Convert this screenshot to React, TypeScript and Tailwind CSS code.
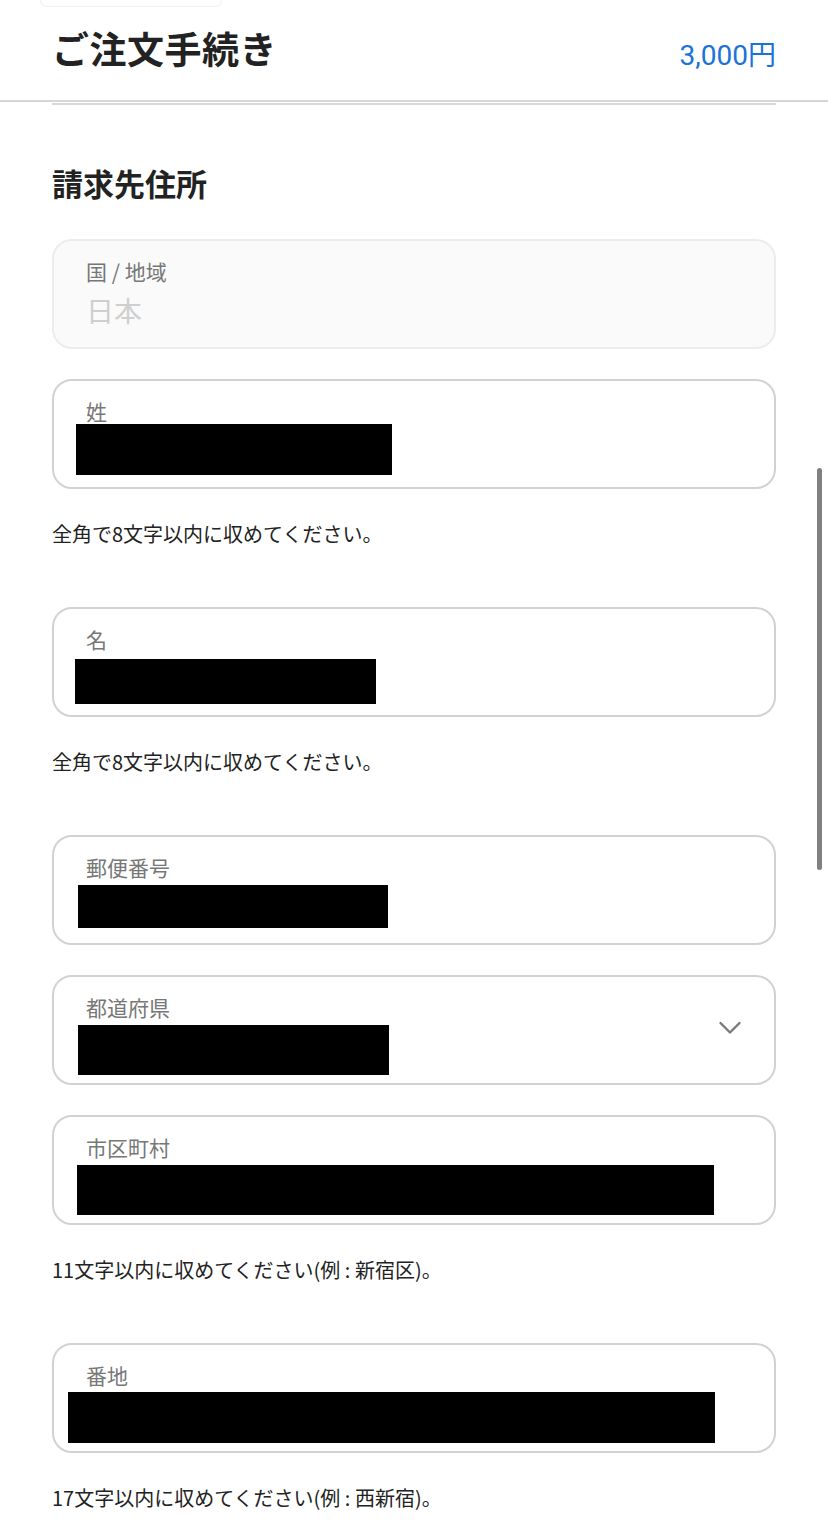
import React from 'react';

type Field = {
  label: string;
  select?: boolean;
  hint?: string;
  // redacted value block, offsets from the field's top-left corner
  mask: { left: number; top: number; width: number; height: number };
};

const fields: Field[] = [
  { label: '姓', hint: '全角で8文字以内に収めてください。', mask: { left: 24, top: 45, width: 316, height: 51 } },
  { label: '名', hint: '全角で8文字以内に収めてください。', mask: { left: 23, top: 52, width: 301, height: 45 } },
  { label: '郵便番号', mask: { left: 26, top: 50, width: 310, height: 43 } },
  { label: '都道府県', select: true, mask: { left: 26, top: 50, width: 311, height: 50 } },
  { label: '市区町村', hint: '11文字以内に収めてください(例 : 新宿区)。', mask: { left: 25, top: 50, width: 637, height: 50 } },
  { label: '番地', hint: '17文字以内に収めてください(例 : 西新宿)。', mask: { left: 16, top: 49, width: 647, height: 51 } },
];

function Chevron() {
  return (
    <svg width="24" height="14" viewBox="0 0 24 14" fill="none" className="absolute right-[32px] top-[44px]">
      <polyline points="2.5,2 12,11.5 21.5,2" stroke="#7a7a7a" strokeWidth="2.4" strokeLinecap="round" strokeLinejoin="round" />
    </svg>
  );
}

function InputField({ field }: { field: Field }) {
  return (
    <div>
      <div className="relative h-[110px] rounded-[20px] border-2 border-[#d2d2d2] bg-white px-[32px] pt-[20px]">
        <div className="text-[21px] leading-[21px] text-[#777]">{field.label}</div>
        <div
          className="absolute bg-black"
          style={{ left: field.mask.left - 2, top: field.mask.top - 2, width: field.mask.width, height: field.mask.height }}
        />
        {field.select && <Chevron />}
      </div>
      {field.hint ? (
        <p className="pt-[31px] pb-[59px] text-[20px] leading-[28px] text-[#222]">{field.hint}</p>
      ) : (
        <div className="h-[30px]" />
      )}
    </div>
  );
}

export default function App() {
  return (
    <div
      className="relative min-h-[1540px] overflow-hidden bg-white"
      style={{ fontFamily: '"Noto Sans CJK JP", "Noto Sans", sans-serif' }}
    >
      {/* bottom edge of the card above */}
      <div className="ml-[40px] h-[7px] w-[182px] rounded-b-[10px] border border-t-0 border-[#f0f0f0]" />

      <header className="flex h-[95px] items-start justify-between border-b-2 border-[#d6d6d6] px-[52px] pt-[21px]">
        <h1 className="text-[37px] font-semibold leading-[40px] tracking-[0.5px] text-[#222]">ご注文手続き</h1>
        <span
          className="mt-[12px] text-[28px] leading-[32px] text-[#1a73d8]"
          style={{ fontFamily: 'Roboto, "Noto Sans CJK JP", sans-serif' }}
        >
          3,000円
        </span>
      </header>
      <div className="mx-[52px] mt-[1px] h-[2px] bg-[#d9d9d9]" />

      <section className="px-[52px]">
        <h2 className="mt-[60px] text-[31px] font-bold leading-[36px] text-[#222]">請求先住所</h2>

        <div className="mt-[38px] mb-[30px] h-[110px] rounded-[20px] border-2 border-[#ececec] bg-[#fafafa] px-[32px] pt-[20px]">
          <div className="text-[21px] leading-[21px] text-[#777]">国 / 地域</div>
          <div className="mt-[14px] text-[28px] leading-[28px] text-[#cfcfcf]">日本</div>
        </div>

        {fields.map((f) => (
          <InputField key={f.label} field={f} />
        ))}
      </section>

      {/* scroll indicator */}
      <div className="absolute right-[6px] top-[468px] h-[402px] w-[5px] rounded-full bg-[#808080]" />
    </div>
  );
}
